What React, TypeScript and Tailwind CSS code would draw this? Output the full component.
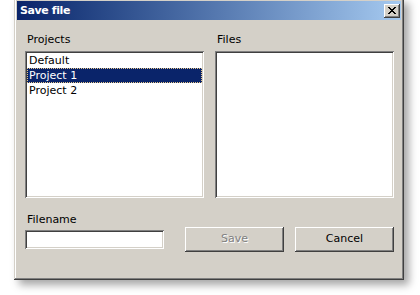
import React from 'react';

const raised =
  'shadow-[inset_-1px_-1px_#404040,inset_1px_1px_#ffffff,inset_-2px_-2px_#808080,inset_2px_2px_#d4d0c8]';
const sunken =
  'shadow-[inset_1px_1px_#808080,inset_-1px_-1px_#ffffff,inset_2px_2px_#404040,inset_-2px_-2px_#d4d0c8]';

function CloseGlyph() {
  const rows = ['XX....XX', '.XX..XX.', '..XXXX..', '...XX...', '..XXXX..', '.XX..XX.', 'XX....XX'];
  return (
    <svg width="8" height="7" viewBox="0 0 8 7" shapeRendering="crispEdges">
      {rows.map((r, y) =>
        r.split('').map((c, x) => (c === 'X' ? <rect key={`${x}-${y}`} x={x} y={y} width="1" height="1" fill="#000" /> : null))
      )}
    </svg>
  );
}

function ListBox({ items, selected }: { items: string[]; selected?: number }) {
  return (
    <div className={`h-[147px] bg-white p-[2px] ${sunken}`}>
      {items.map((item, i) => (
        <div
          key={item}
          className={
            i === selected
              ? 'h-[15px] leading-[13px] pl-[1px] bg-[#0a246a] text-white border border-dotted border-[#e8c88a]'
              : 'h-[15px] leading-[15px] pl-[2px] text-black'
          }
        >
          {item}
        </div>
      ))}
    </div>
  );
}

export default function App() {
  return (
    <div className="w-[420px] h-[295px] bg-white overflow-hidden font-['DejaVu_Sans',sans-serif] text-[11px]">
      <div
        className="ml-[14px] -mt-[2px] w-[390px] h-[282px] p-[3px] bg-[#d4d0c8] shadow-[inset_-1px_-1px_#404040,inset_1px_1px_#d4d0c8,inset_-2px_-2px_#808080,inset_2px_2px_#ffffff,5px_5px_8px_rgba(0,0,0,0.35)] flex flex-col"
      >
        {/* title bar */}
        <div className="h-[19px] flex items-center justify-between bg-gradient-to-r from-[#0a246a] to-[#a6caf0] pl-[3px] pr-[1px]">
          <span className="font-bold text-white leading-[19px] tracking-[-0.4px]">Save file</span>
          <button className={`w-[16px] h-[14px] bg-[#d4d0c8] flex items-center justify-center ${raised}`}>
            <CloseGlyph />
          </button>
        </div>

        <div className="flex-1 px-[8px] pt-[13px] pr-[7px] flex flex-col">
          <div className="flex gap-[11px]">
            <div className="w-[179px] flex flex-col">
              <span className="leading-[13px] pl-[2px] mb-[5px] text-black">Projects</span>
              <ListBox items={['Default', 'Project 1', 'Project 2']} selected={1} />
            </div>
            <div className="w-[179px] flex flex-col">
              <span className="leading-[13px] pl-[2px] mb-[5px] text-black">Files</span>
              <ListBox items={[]} />
            </div>
          </div>

          <div className="flex items-start mt-[15px]">
            <div className="w-[139px] flex flex-col">
              <span className="leading-[13px] pl-[2px] mb-[4px] text-black">Filename</span>
              <div className={`h-[19px] bg-white ${sunken}`} />
            </div>
            <button
              disabled
              className={`ml-[21px] mt-[14px] w-[99px] h-[25px] bg-[#d4d0c8] text-[#808080] [text-shadow:1px_1px_#ffffff] ${raised}`}
            >
              Save
            </button>
            <button className={`ml-[11px] mt-[14px] w-[99px] h-[25px] bg-[#d4d0c8] text-black ${raised}`}>
              Cancel
            </button>
          </div>
        </div>
      </div>
    </div>
  );
}
